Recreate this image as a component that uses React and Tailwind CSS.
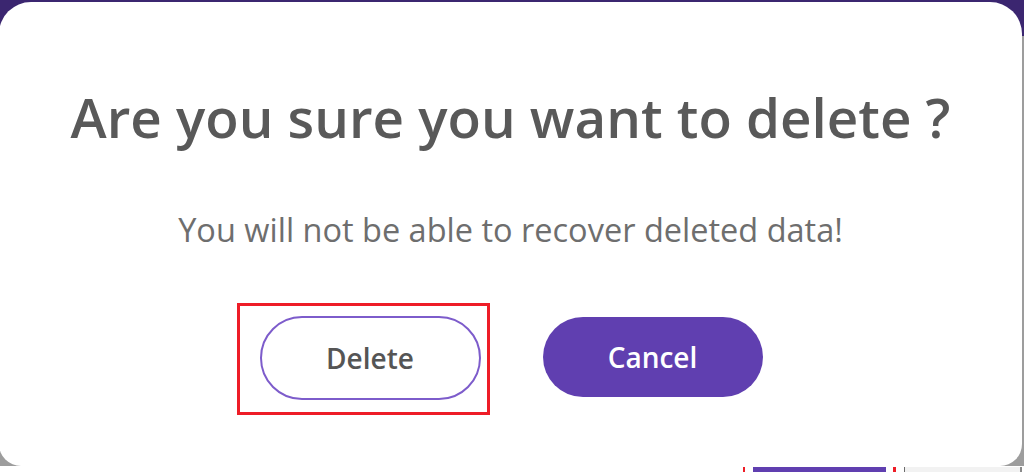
const App = () => {
    return (
        <div
            className="relative w-[1024px] h-[472px] overflow-hidden bg-[#9d9d9d] flex flex-col"
            style={{ fontFamily: '"Open Sans", "Noto Sans", sans-serif' }}
        >
            {/* page header peeking out behind the modal */}
            <div className="absolute left-0 top-0 w-full h-[36px] bg-[#3b2670]" />

            <div className="relative mt-[2px] ml-[-1px] w-[1023px] h-[464px] bg-white rounded-t-[32px] rounded-b-[22px] flex flex-col items-center pt-[88px]">
                <h1 className="text-[54.7px] leading-[55px] font-semibold text-[#595959]">
                    Are you sure you want to delete ?
                </h1>
                <p className="mt-[68px] text-[32.5px] leading-[33px] text-[#6e6e6e]">
                    You will not be able to recover deleted data!
                </p>
                <div className="mt-[70px] flex flex-row gap-[62px] pl-[1px]">
                    <div className="relative">
                        <button className="w-[221px] h-[84px] rounded-full border-2 border-[#7d5ccb] bg-white text-[28px] font-semibold text-[#555555]">
                            Delete
                        </button>
                        <div className="absolute left-[-23px] top-[-13px] w-[253px] h-[112px] border-[3px] border-[#ee1d27] pointer-events-none" />
                    </div>
                    <button className="w-[220px] h-[80px] mt-[1px] rounded-full bg-[#603fb0] text-[28px] font-semibold text-white">
                        Cancel
                    </button>
                </div>
            </div>

            {/* bottom strip of the page underneath */}
            <div className="h-[6px] bg-white flex flex-row items-start overflow-hidden">
                <div className="ml-[743px] mt-[1px] w-[2px] h-[5px] bg-[#ee1d27]" />
                <div className="ml-[8px] mt-[1px] w-[133px] h-[8px] bg-[#603fb0] text-white text-[18px] leading-[28px] text-center font-semibold">
                    Save
                </div>
                <div className="ml-[7px] mt-[1px] w-[3px] h-[5px] bg-[#ee1d27]" />
                <div className="ml-[8px] mt-[1px] w-[118px] h-[8px] bg-[#f2f2f2] border-l border-[#6b6b6b] border-r-2 border-r-[#8a8a8a] text-[#333333] text-[18px] leading-[28px] text-center">
                    Cancel
                </div>
            </div>
        </div>
    );
};

export default App;
